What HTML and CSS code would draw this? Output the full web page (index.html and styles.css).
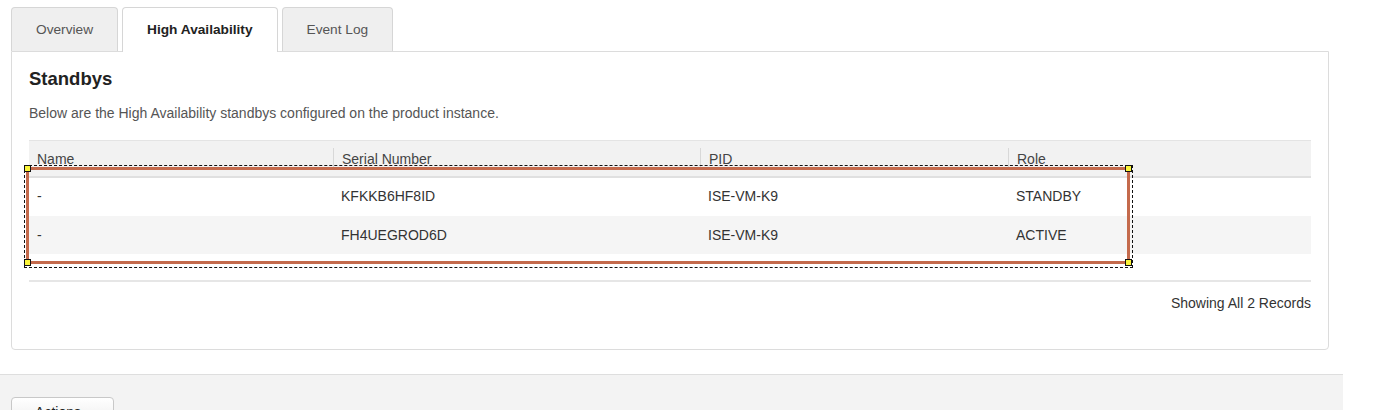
FILE: index.html
```html
<!DOCTYPE html>
<html>
<head>
<meta charset="utf-8">
<link rel="stylesheet" href="styles.css">
</head>
<body>
<div class="page">
  <div class="tabs">
    <div class="tab">Overview</div>
    <div class="tab active">High Availability</div>
    <div class="tab">Event Log</div>
  </div>
  <div class="panel">
    <h2 class="title">Standbys</h2>
    <p class="desc">Below are the High Availability standbys configured on the product instance.</p>
    <div class="table">
      <div class="row head">
        <div class="cell">Name</div>
        <div class="cell sep">Serial Number</div>
        <div class="cell sep">PID</div>
        <div class="cell sep">Role</div>
      </div>
      <div class="row">
        <div class="cell">-</div>
        <div class="cell">KFKKB6HF8ID</div>
        <div class="cell">ISE-VM-K9</div>
        <div class="cell">STANDBY</div>
      </div>
      <div class="row alt">
        <div class="cell">-</div>
        <div class="cell">FH4UEGROD6D</div>
        <div class="cell">ISE-VM-K9</div>
        <div class="cell">ACTIVE</div>
      </div>
      <div class="selection">
        <div class="sel-box">
          <span class="handle tl"></span>
          <span class="handle tr"></span>
          <span class="handle bl"></span>
          <span class="handle br"></span>
        </div>
      </div>
    </div>
    <div class="footer">Showing All 2 Records</div>
  </div>
</div>
<div class="toolbar">
  <button class="btn">Actions <span class="caret">&#9662;</span></button>
</div>
</body>
</html>
```

FILE: styles.css
```css
* { box-sizing: border-box; }
html, body { margin: 0; padding: 0; background: #fff; }
body {
  font-family: "Liberation Sans", Arial, Helvetica, sans-serif;
  font-size: 14px;
  color: #333;
}
.page {
  padding: 7px 0 0 11px;
  width: 1329px;
}
.tabs {
  display: flex;
  gap: 4px;
  align-items: flex-end;
  height: 44px;
}
.tab {
  height: 44px;
  line-height: 44px;
  padding: 0 24px;
  border: 1px solid #d6d6d6;
  border-bottom: none;
  border-radius: 4px 4px 0 0;
  background: #efefef;
  color: #555;
  font-size: 13.7px;
}
.tab.last { padding: 0 25px; }
.tab.active {
  background: #fff;
  color: #222;
  font-weight: bold;
  height: 45px;
  margin-bottom: -1px;
  padding: 0 24px;
  position: relative;
  z-index: 1;
}
.panel {
  border: 1px solid #dcdcdc;
  border-radius: 0 0 4px 4px;
  height: 299px;
  padding: 16px 17px 0 17px;
}
.title {
  margin: 0;
  font-size: 18.5px;
  line-height: 22px;
  font-weight: bold;
  color: #222;
}
.desc {
  margin: 15px 0 0 0;
  font-size: 14px;
  line-height: 17px;
  color: #555;
}
.table {
  position: relative;
  margin-top: 18px;
  border-top: 1px solid #e4e4e4;
}
.row {
  display: grid;
  grid-template-columns: 304px 367px 308px 1fr;
  height: 38px;
  align-items: center;
}
.row.head {
  height: 37px;
  background: #f2f2f2;
  border-bottom: 2px solid #e0e0e0;
}
.row.alt { background: #f5f5f5; }
.cell {
  padding-left: 8px;
  position: relative;
  height: 100%;
  display: flex;
  align-items: center;
  font-size: 14px;
  color: #333;
  padding-bottom: 2px;
}
.row.alt .cell { padding-bottom: 1px; }
.head .cell { color: #444; padding-bottom: 0; }
.cell.sep { padding-left: 9px; }
.cell.sep::before {
  content: "";
  position: absolute;
  left: 0;
  top: 7px;
  bottom: 8px;
  border-left: 1px solid #d8d8d8;
}
.footer {
  margin-top: 26px;
  border-top: 2px solid #e6e6e6;
  padding-top: 13px;
  text-align: right;
  font-size: 14px;
  color: #333;
}
.selection {
  position: absolute;
  left: -5px;
  top: 24px;
  width: 1109px;
  height: 103px;
  border: 1px dashed #111;
}
.sel-box {
  position: absolute;
  left: 1px;
  top: 1px;
  width: 1104px;
  height: 97px;
  border: 3px solid #c46a4c;
}
.handle {
  position: absolute;
  width: 7px;
  height: 7px;
  background: #fbf53a;
  border: 1px solid #111;
}
.handle.tl { left: -5px; top: -5px; }
.handle.tr { right: -5px; top: -5px; }
.handle.bl { left: -5px; bottom: -5px; }
.handle.br { right: -5px; bottom: -5px; }
.toolbar {
  margin-top: 24px;
  width: 1343px;
  height: 60px;
  background: #f3f3f3;
  border-top: 1px solid #dedede;
  padding: 22px 0 0 11px;
}
.btn {
  width: 103px;
  height: 30px;
  border: 1px solid #c8c8c8;
  border-radius: 4px;
  background: linear-gradient(#ffffff, #ececec);
  font-family: "Liberation Sans", Arial, sans-serif;
  font-size: 14px;
  color: #222;
  padding: 0;
}
.caret { font-size: 10px; color: #444; }
```
